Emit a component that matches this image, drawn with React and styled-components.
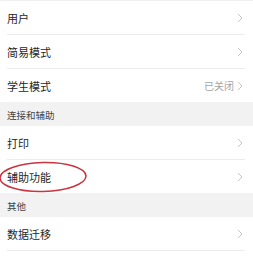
import styled, { createGlobalStyle } from 'styled-components';

const GlobalStyle = createGlobalStyle`
  html, body {
    margin: 0;
    padding: 0;
    background: #ffffff;
  }
  body {
    font-family: 'Noto Sans CJK SC', 'Noto Sans', sans-serif;
    overflow: hidden;
  }
`;

const sections = [
  {
    title: null,
    items: [{ label: '用户' }, { label: '简易模式' }, { label: '学生模式', value: '已关闭' }],
  },
  {
    title: '连接和辅助',
    items: [{ label: '打印' }, { label: '辅助功能', circled: true }],
  },
  {
    title: '其他',
    items: [{ label: '数据迁移' }],
  },
];

function Chevron() {
  return (
    <ChevronSvg viewBox='0 0 6 10' width='6' height='10'>
      <path d='M1 1 L5 5 L1 9' fill='none' stroke='#c4c4c4' strokeWidth='1' />
    </ChevronSvg>
  );
}

function Ring() {
  return (
    <RingSvg viewBox='0 0 92 34' width='92' height='34'>
      <ellipse
        cx='44'
        cy='17'
        rx='43'
        ry='14.5'
        fill='none'
        stroke='#c9343f'
        strokeWidth='1.5'
        transform='rotate(-1.5 44 17)'
      />
    </RingSvg>
  );
}

function Row({ item, last }) {
  return (
    <RowWrap>
      <RowInner last={last}>
        <Label>{item.label}</Label>
        <Right>
          {item.value ? <Value>{item.value}</Value> : null}
          <Chevron />
        </Right>
      </RowInner>
      {item.circled ? <Ring /> : null}
    </RowWrap>
  );
}

export default function App() {
  return (
    <>
      <GlobalStyle />
      <Page>
        {sections.map((section, i) => (
          <Section key={i}>
            {section.title ? <Header>{section.title}</Header> : null}
            {section.items.map((item, j) => (
              <Row
                key={item.label}
                item={item}
                last={j === section.items.length - 1 && i < sections.length - 1}
              />
            ))}
          </Section>
        ))}
      </Page>
    </>
  );
}

const Page = styled.div`
  width: 253px;
  height: 258px;
  background: #ffffff;
  border-top: 1px solid #f0f0f0;
  box-sizing: border-box;
  overflow: hidden;
`;

const Section = styled.div`
  display: flex;
  flex-direction: column;
`;

const Header = styled.div`
  height: 24px;
  display: flex;
  align-items: center;
  padding-left: 7px;
  padding-top: 1px;
  box-sizing: border-box;
  background: #f2f2f2;
  color: #444444;
  font-size: 9.5px;
`;

const RowWrap = styled.div`
  position: relative;
  padding: 0 8px 0 7px;
`;

const RowInner = styled.div`
  height: 33px;
  display: flex;
  align-items: center;
  justify-content: space-between;
  border-bottom: ${(props) => (props.last ? 'none' : '1px solid #ececec')};
`;

const Label = styled.span`
  color: #262626;
  font-size: 11px;
`;

const Right = styled.div`
  display: flex;
  align-items: center;
  gap: 3px;
  padding-right: 2px;
`;

const Value = styled.span`
  color: #a3a3a3;
  font-size: 10px;
`;

const ChevronSvg = styled.svg`
  display: block;
`;

const RingSvg = styled.svg`
  position: absolute;
  left: -1px;
  top: 0px;
  pointer-events: none;
`;
